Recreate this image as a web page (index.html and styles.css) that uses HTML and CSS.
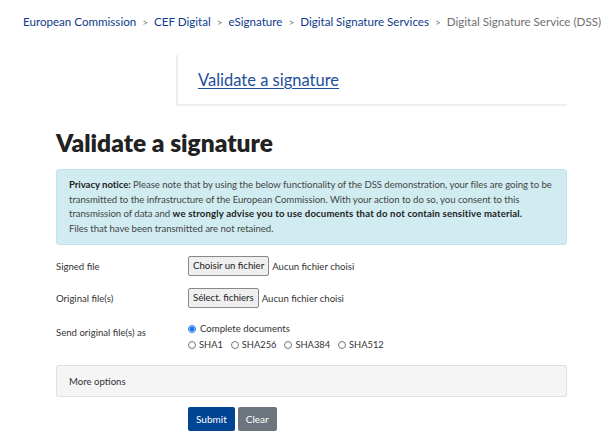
FILE: index.html
```html
<!DOCTYPE html>
<html>
<head>
<meta charset="utf-8">
<link rel="stylesheet" href="styles.css">
</head>
<body>
<nav class="crumbs">
  <a href="#">European Commission</a><span class="sep">&gt;</span><a href="#">CEF Digital</a><span class="sep">&gt;</span><a href="#">eSignature</a><span class="sep">&gt;</span><a href="#">Digital Signature Services</a><span class="sep">&gt;</span><span class="current">Digital Signature Service (DSS)</span>
</nav>
<div class="subnav">
  <a href="#">Validate a signature</a>
</div>
<main class="content">
  <h1>Validate a signature</h1>
  <div class="alert">
    <b>Privacy notice:</b> Please note that by using the below functionality of the DSS demonstration, your files are going to be<br>
    transmitted to the infrastructure of the European Commission. With your action to do so, you consent to this<br>
    transmission of data and <b class="wide">we strongly advise you to use documents that do not contain sensitive material.</b><br>
    Files that have been transmitted are not retained.
  </div>
  <div class="row r1">
    <div class="label">Signed file</div>
    <div class="field"><span class="filebtn">Choisir un fichier</span><span class="none">Aucun fichier choisi</span></div>
  </div>
  <div class="row r2">
    <div class="label">Original file(s)</div>
    <div class="field"><span class="filebtn">Sélect. fichiers</span><span class="none">Aucun fichier choisi</span></div>
  </div>
  <div class="row r3">
    <div class="label">Send original file(s) as</div>
    <div class="field radios">
      <label class="radio"><span class="dot on"></span>Complete documents</label>
      <div class="hashes">
        <label class="radio"><span class="dot"></span>SHA1</label>
        <label class="radio"><span class="dot"></span>SHA256</label>
        <label class="radio"><span class="dot"></span>SHA384</label>
        <label class="radio"><span class="dot"></span>SHA512</label>
      </div>
    </div>
  </div>
  <div class="more">More options</div>
  <div class="actions">
    <button class="btn primary">Submit</button>
    <button class="btn secondary">Clear</button>
  </div>
</main>
</body>
</html>
```
FILE: styles.css
```css
* { box-sizing: border-box; }
html, body { margin: 0; padding: 0; background: #fff; }
body {
  font-family: Lato, "Noto Sans", sans-serif;
  color: #333;
  width: 603px;
  height: 441px;
  overflow: hidden;
}
a { color: #004494; text-decoration: none; }
.crumbs {
  padding: 14px 0 0 23px;
  font-size: 11.6px;
  line-height: 16px;
  white-space: nowrap;
  height: 55px;
}
.crumbs a { color: #0e3b8c; }
.crumbs .sep { color: #777; margin: 0 6px; font-size: 10px; }
.crumbs .current { color: #707070; }
.subnav {
  margin-left: 176px;
  width: 391px;
  height: 51px;
  border-left: 2px solid #eee;
  border-bottom: 2px solid #eee;
  padding: 15px 0 0 20px;
  font-size: 16.5px;
}
.subnav a { text-decoration: underline; color: #1d4f9c; text-underline-offset: 2px; }
.content { margin: 0 36px 0 56px; }
h1 {
  margin: 22px 0 0;
  font-size: 24.5px;
  line-height: 30px;
  font-weight: 800;
  color: #222;
}
.alert {
  margin-top: 11px;
  background: #d1ecf1;
  border: 1px solid #bee5eb;
  border-radius: 3px;
  color: #444;
  font-size: 9.6px;
  letter-spacing: -0.05px;
  line-height: 14.5px;
  padding: 8px 12px 7px 12px;
  height: 76px;
  white-space: nowrap;
}
.alert b { color: #222; }
.alert b.wide { letter-spacing: 0.15px; }
.row { display: flex; font-size: 9.6px; color: #333; }
.label { width: 132px; }
.r1 { margin-top: 11px; align-items: center; height: 20px; }
.r2 { margin-top: 12px; align-items: center; height: 20px; }
.r3 { margin-top: 13px; }
.r3 .label { padding-top: 6px; }
.field { display: flex; align-items: center; }
.filebtn {
  display: inline-block;
  border: 1px solid #888;
  background: #efefef;
  border-radius: 2px;
  padding: 2px 4px;
  font-size: 9.6px;
  line-height: 14px;
  color: #222;
  margin-right: 3px;
}
.none { color: #333; }
.radios { flex-direction: column; align-items: flex-start; }
.radio { display: flex; align-items: center; line-height: 16px; margin-right: 8px; }
.hashes { display: flex; font-size: 9.3px; }
.dot {
  width: 8px; height: 8px; border-radius: 50%;
  border: 1px solid #777; margin-right: 3px; display: inline-block; background: #fff;
}
.dot.on { border-color: #1a73e8; background: radial-gradient(circle, #1a73e8 0 2.2px, #fff 2.8px); margin-right: 4px; }
.more {
  margin-top: 12px;
  background: #f5f5f5;
  border: 1px solid #e0e0e0;
  border-radius: 2px;
  height: 32px;
  padding: 0 12px;
  display: flex; align-items: center;
  font-size: 9.6px; color: #333;
}
.actions { margin-top: 10px; padding-left: 132px; display: flex; gap: 3px; }
.btn {
  font-family: inherit;
  font-size: 10px;
  color: #fff;
  border: none;
  border-radius: 2px;
  height: 24px;
  padding: 0 8px;
}
.primary { background: #004494; }
.secondary { background: #6c757d; }
```
